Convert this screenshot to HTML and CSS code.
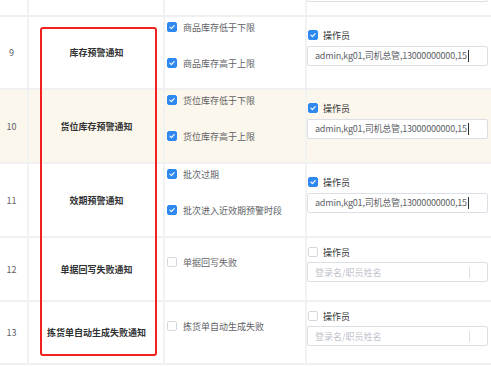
FILE: index.html
```html
<!DOCTYPE html>
<html lang="zh">
<head>
<meta charset="utf-8">
<link rel="stylesheet" href="styles.css">
</head>
<body>
<div class="table">
  <div class="row row-top">
    <div class="cell c-no"></div>
    <div class="cell c-name"></div>
    <div class="cell c-cond"></div>
    <div class="cell c-recv"><div class="input-tail"></div></div>
  </div>

  <div class="row row-tall">
    <div class="cell c-no">9</div>
    <div class="cell c-name">库存预警通知</div>
    <div class="cell c-cond cond-two">
      <label class="opt"><span class="cb on"><svg viewBox="0 0 10 10"><polyline points="2.4,5.2 4.3,7 7.7,3.3"/></svg></span>商品库存低于下限</label>
      <label class="opt"><span class="cb on"><svg viewBox="0 0 10 10"><polyline points="2.4,5.2 4.3,7 7.7,3.3"/></svg></span>商品库存高于上限</label>
    </div>
    <div class="cell c-recv recv-tall">
      <label class="opt recv-label"><span class="cb on"><svg viewBox="0 0 10 10"><polyline points="2.4,5.2 4.3,7 7.7,3.3"/></svg></span>操作员</label>
      <div class="input"><span class="val">admin,kg01,司机总管,13000000000,15</span></div>
    </div>
  </div>

  <div class="row row-tall hl">
    <div class="cell c-no">10</div>
    <div class="cell c-name">货位库存预警通知</div>
    <div class="cell c-cond cond-two">
      <label class="opt"><span class="cb on"><svg viewBox="0 0 10 10"><polyline points="2.4,5.2 4.3,7 7.7,3.3"/></svg></span>货位库存低于下限</label>
      <label class="opt"><span class="cb on"><svg viewBox="0 0 10 10"><polyline points="2.4,5.2 4.3,7 7.7,3.3"/></svg></span>货位库存高于上限</label>
    </div>
    <div class="cell c-recv recv-tall">
      <label class="opt recv-label"><span class="cb on"><svg viewBox="0 0 10 10"><polyline points="2.4,5.2 4.3,7 7.7,3.3"/></svg></span>操作员</label>
      <div class="input"><span class="val">admin,kg01,司机总管,13000000000,15</span></div>
    </div>
  </div>

  <div class="row row-tall">
    <div class="cell c-no">11</div>
    <div class="cell c-name">效期预警通知</div>
    <div class="cell c-cond cond-two">
      <label class="opt"><span class="cb on"><svg viewBox="0 0 10 10"><polyline points="2.4,5.2 4.3,7 7.7,3.3"/></svg></span>批次过期</label>
      <label class="opt"><span class="cb on"><svg viewBox="0 0 10 10"><polyline points="2.4,5.2 4.3,7 7.7,3.3"/></svg></span>批次进入近效期预警时段</label>
    </div>
    <div class="cell c-recv recv-tall">
      <label class="opt recv-label"><span class="cb on"><svg viewBox="0 0 10 10"><polyline points="2.4,5.2 4.3,7 7.7,3.3"/></svg></span>操作员</label>
      <div class="input"><span class="val">admin,kg01,司机总管,13000000000,15</span></div>
    </div>
  </div>

  <div class="row row-short">
    <div class="cell c-no">12</div>
    <div class="cell c-name">单据回写失败通知</div>
    <div class="cell c-cond cond-one">
      <label class="opt"><span class="cb"></span>单据回写失败</label>
    </div>
    <div class="cell c-recv recv-short">
      <label class="opt recv-label"><span class="cb"></span>操作员</label>
      <div class="input"><span class="ph">登录名/职员姓名</span><span class="sep"></span></div>
    </div>
  </div>

  <div class="row row-short last">
    <div class="cell c-no">13</div>
    <div class="cell c-name">拣货单自动生成失败通知</div>
    <div class="cell c-cond cond-one">
      <label class="opt"><span class="cb"></span>拣货单自动生成失败</label>
    </div>
    <div class="cell c-recv recv-short">
      <label class="opt recv-label"><span class="cb"></span>操作员</label>
      <div class="input"><span class="ph">登录名/职员姓名</span><span class="sep"></span></div>
    </div>
  </div>

  <div class="mark"></div>
</div>
</body>
</html>
```

FILE: styles.css
```css
html, body {
  margin: 0;
  padding: 0;
  background: #ffffff;
}
body {
  font-family: "Noto Sans CJK SC", "Noto Sans", sans-serif;
  font-size: 9px;
  color: #606266;
  width: 491px;
  height: 366px;
  overflow: hidden;
}
.table {
  position: relative;
  width: 491px;
}
.row {
  display: grid;
  grid-template-columns: 29px 136px 142px 184px;
  box-sizing: border-box;
  border-bottom: 2px solid #f0f0f0;
  background: #ffffff;
}
.row.hl { background: #fcf7ec; }
.row-top { height: 17px; }
.row-tall { height: 74px; }
.row-tall:nth-child(2) { height: 73px; }
.row-short { height: 64px; }
.row-short.last { height: 63px; }

.cell {
  box-sizing: border-box;
  border-right: 2px solid #f2f2f2;
  min-width: 0;
}
.c-recv { border-right: none; }

.c-no {
  display: flex;
  align-items: center;
  justify-content: center;
  padding-right: 4px;
  color: #606266;
}
.c-name {
  display: flex;
  align-items: center;
  justify-content: center;
  font-weight: 700;
  color: #303133;
  white-space: nowrap;
  padding-left: 1px;
}
.c-cond {
  display: flex;
  flex-direction: column;
  padding-left: 2px;
}
.cond-two { padding-top: 0; gap: 16px; }
.cond-one { padding-top: 14px; }

.opt {
  display: flex;
  align-items: center;
  height: 20px;
  gap: 6px;
  white-space: nowrap;
  color: #606266;
}
.cb {
  box-sizing: border-box;
  width: 10px;
  height: 10px;
  border-radius: 2px;
  border: 1px solid #d4d7de;
  background: #ffffff;
  flex: none;
  display: flex;
}
.cb.on {
  background: #2f88f0;
  border-color: #2f88f0;
}
.cb svg {
  width: 8px;
  height: 8px;
  fill: none;
  stroke: #ffffff;
  stroke-width: 1.5;
  stroke-linecap: round;
  stroke-linejoin: round;
}
.c-recv {
  display: flex;
  flex-direction: column;
}
.recv-tall { padding-top: 8px; gap: 1px; }
.recv-short { padding-top: 4px; gap: 0; }
.recv-label {
  gap: 5px;
  padding-left: 1px;
  color: #303133;
}
.input {
  position: relative;
  box-sizing: border-box;
  width: 181px;
  height: 20px;
  border: 1px solid #dcdfe6;
  border-radius: 2px;
  background: #ffffff;
  display: flex;
  align-items: center;
  padding-left: 7px;
  overflow: hidden;
}
.val {
  color: #606266;
  white-space: nowrap;
  letter-spacing: -0.2px;
  padding-right: 1px;
  border-right: 1px solid #303133;
  line-height: 12px;
}
.ph {
  color: #c0c4cc;
  white-space: nowrap;
}
.sep {
  position: absolute;
  left: 161px;
  top: 4px;
  width: 1px;
  height: 11px;
  background: #dcdfe6;
}
.input-tail {
  box-sizing: border-box;
  width: 181px;
  height: 2px;
  border: 1px solid #dcdfe6;
  border-top: none;
  border-radius: 0 0 2px 2px;
}
.mark {
  position: absolute;
  left: 40px;
  top: 27px;
  width: 117px;
  height: 329px;
  box-sizing: border-box;
  border: 2px solid #f2211f;
  border-radius: 3px;
  pointer-events: none;
}
```
